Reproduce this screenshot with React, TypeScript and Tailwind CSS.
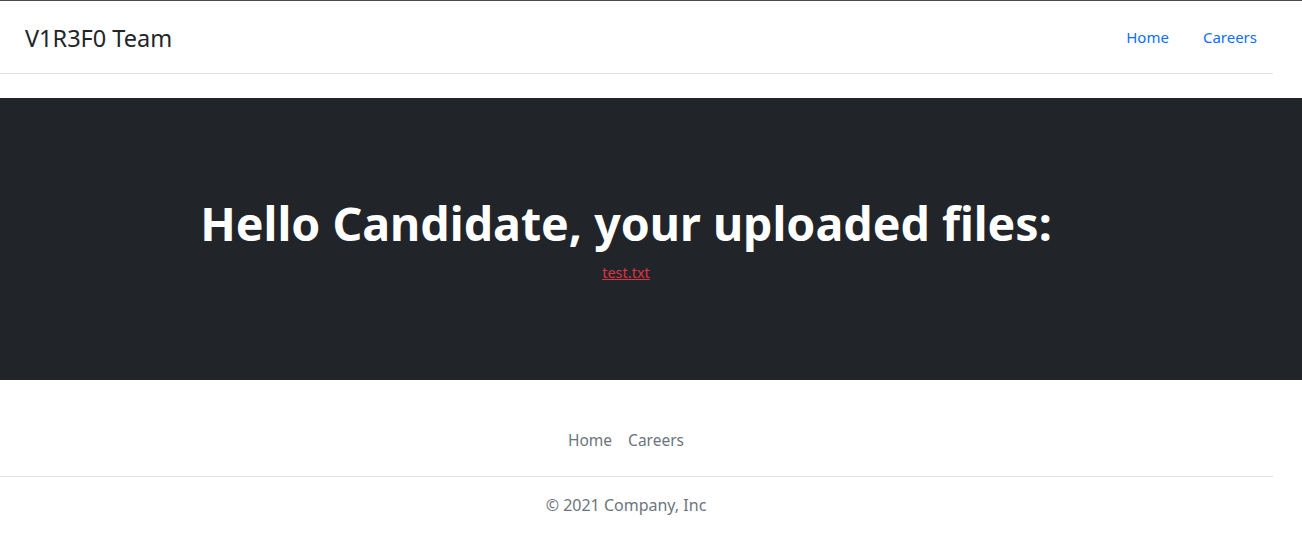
export default function App() {
  return (
    <div className="w-[1302px] min-h-[536px] bg-white border-t border-[#4a4a4a]" style={{ fontFamily: '"Noto Sans", "Open Sans", sans-serif' }}>
      <header className="w-[1273px] h-[73px] border-b border-[#dee2e6] flex items-center justify-between pl-[25px] pr-[16px]">
        <span className="text-[23.5px] text-[#212529] leading-none mt-[4px]">V1R3F0 Team</span>
        <nav className="flex gap-[34px] text-[15px] text-[#0d6efd]">
          <a href="#" className="no-underline">Home</a>
          <a href="#" className="no-underline">Careers</a>
        </nav>
      </header>
      <section className="mt-[24px] h-[282px] bg-[#212529] flex">
        <div className="w-[1252px] flex flex-col items-center pt-[98px]">
          <h1 className="text-[46.5px] font-bold text-white leading-[1.2]">Hello Candidate, your uploaded files:</h1>
          <a href="#" className="text-[14.5px] text-[#dc3545] underline mt-[10px]">test.txt</a>
        </div>
      </section>
      <footer className="w-[1273px] pt-[49px]">
        <div className="w-[1252px] flex justify-center gap-[16px] text-[15.5px] text-[#6c757d] pb-[24px]">
          <a href="#">Home</a>
          <a href="#">Careers</a>
        </div>
        <div className="border-t border-[#dee2e6]" />
        <p className="w-[1252px] text-center text-[16px] text-[#6c757d] pt-[16px]">© 2021 Company, Inc</p>
      </footer>
    </div>
  );
}
